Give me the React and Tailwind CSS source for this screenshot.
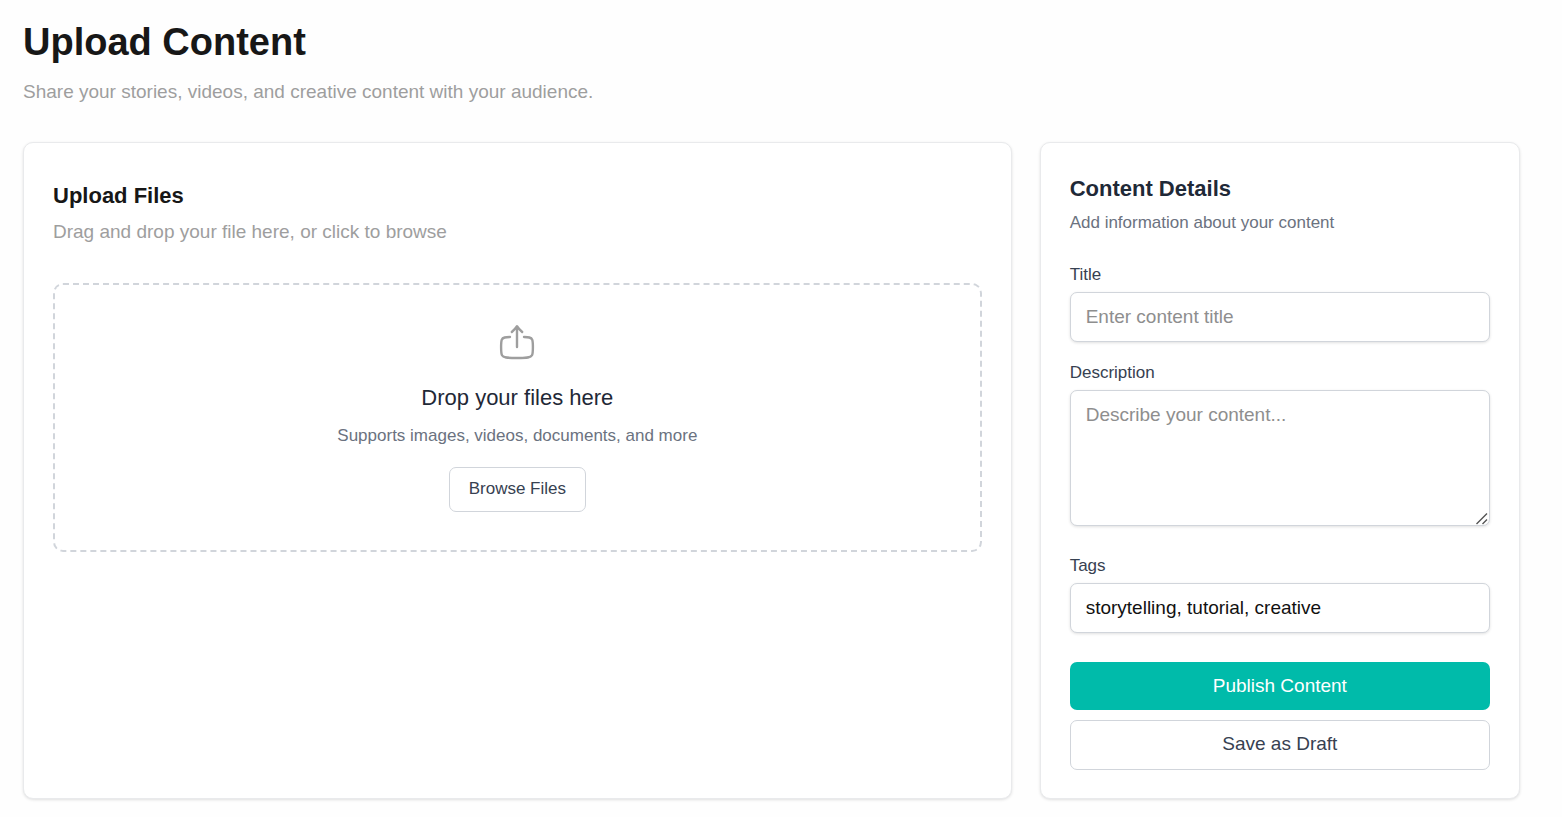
import { useRef } from "react";

const card = "rounded-[10px] border border-[#e9eaec] bg-white px-[29px] pb-7 shadow-[0_1px_3px_rgba(0,0,0,0.12)]";
const label = "block text-[17px] leading-[26px] text-[#374151]";
const field =
  "block w-full rounded-[7px] border border-[#d1d5db] bg-white px-[15px] text-[19px] leading-7 text-[#111111] shadow-[0_1px_3px_rgba(0,0,0,0.12)] placeholder:text-[#8e8e8e]";

function UploadIcon() {
  return (
    <svg
      className="size-[38px] text-[#9e9e9e]"
      viewBox="0 0 38 38"
      fill="none"
      stroke="currentColor"
      strokeWidth="2.4"
      strokeLinecap="round"
      strokeLinejoin="round"
      aria-hidden="true"
    >
      <path d="M19 24V3.400M13.800 9c1.800-1.500 3.700-3.400 5.200-5.800 1.500 2.400 3.400 4.300 5.200 5.800" />
      <path d="M12 14c-4.300.2-7.300.3-8.200 2.600C3.200 18.200 3.100 20.500 3.100 24.300c0 4 .1 6.400.9 8 1.200 2.400 4.500 2.700 15 2.700s13.800-.3 15-2.700c.8-1.600.9-4 .9-8 0-3.800-.1-6.100-.7-7.700C33.300 14.300 30.300 14.200 26 14" />
    </svg>
  );
}

function ResizeGrip() {
  return (
    <svg
      className="pointer-events-none absolute right-[2px] bottom-[1px] size-3 text-[#555555]"
      viewBox="0 0 12 12"
      fill="none"
      stroke="currentColor"
      strokeWidth="1.4"
      aria-hidden="true"
    >
      <path d="M.5 11 11 .5M6.500 11 11 6.500" />
    </svg>
  );
}

function UploadPanel() {
  const picker = useRef(null);
  return (
    <section className={`${card} pt-9 lg:col-span-2`}>
      <h2 className="text-[22px] leading-[34px] font-bold text-[#171717]">Upload Files</h2>
      <p className="mt-1 text-[19px] leading-[30px] text-[#9e9e9e]">
        Drag and drop your file here, or click to browse
      </p>
      <div className="mt-9 flex flex-col items-center rounded-[10px] border-2 border-dashed border-[#d1d5db] px-7 py-[38px] text-center">
        <UploadIcon />
        <h3 className="mt-5 text-[22px] leading-[34px] text-[#1f2937]">Drop your files here</h3>
        <p className="mt-2 text-[17px] leading-[26px] text-[#6b7280]">
          Supports images, videos, documents, and more
        </p>
        <input ref={picker} type="file" multiple aria-label="Files" className="hidden" />
        <button
          type="button"
          onClick={() => picker.current?.click()}
          className="mt-[18px] rounded-[7px] border border-[#d1d5db] bg-white px-[19px] pt-2 pb-[9px] text-[17px] leading-[26px] text-[#374151]"
        >
          Browse Files
        </button>
      </div>
    </section>
  );
}

function DetailsPanel() {
  return (
    <section className={`${card} pt-[29px]`}>
      <h2 className="text-[22px] leading-[34px] font-bold text-[#1f2937]">Content Details</h2>
      <p className="mt-1 text-[17px] leading-[26px] text-[#6b7280]">Add information about your content</p>
      <form className="mt-[26px]" onSubmit={(e) => e.preventDefault()}>
        <label htmlFor="title" className={label}>Title</label>
        <input id="title" type="text" placeholder="Enter content title" className={`${field} mt-1 py-[10px]`} />
        <label htmlFor="description" className={`${label} mt-[18px]`}>Description</label>
        <div className="relative mt-1">
          <textarea
            id="description"
            placeholder="Describe your content..."
            className={`${field} h-[136px] resize-y py-[10px] [&::-webkit-resizer]:bg-transparent`}
          />
          <ResizeGrip />
        </div>
        <label htmlFor="tags" className={`${label} mt-[27px]`}>Tags</label>
        <input id="tags" type="text" defaultValue="storytelling, tutorial, creative" className={`${field} mt-1 py-[10px]`} />
        <button
          type="submit"
          className="mt-[29px] block w-full rounded-[7px] bg-[#00bbaa] py-[10px] text-[19px] leading-7 text-white"
        >
          Publish Content
        </button>
        <button
          type="button"
          className="mt-[10px] block w-full rounded-[7px] border border-[#d1d5db] bg-white pt-[9px] pb-[11px] text-[19px] leading-7 text-[#374151]"
        >
          Save as Draft
        </button>
      </form>
    </section>
  );
}

export default function App() {
  return (
    <main className="min-h-screen bg-[#fefefe] pt-[14px] pr-[42px] pb-[18px] pl-[23px] font-['Liberation_Sans',Arial,sans-serif]">
      <header>
        <h1 className="text-[38px] leading-[56px] font-bold text-[#171717]">Upload Content</h1>
        <p className="mt-[7px] text-[19px] leading-[30px] text-[#9e9e9e]">
          Share your stories, videos, and creative content with your audience.
        </p>
      </header>
      <div className="mt-[35px] grid grid-cols-1 gap-7 lg:grid-cols-3">
        <UploadPanel />
        <DetailsPanel />
      </div>
    </main>
  );
}
